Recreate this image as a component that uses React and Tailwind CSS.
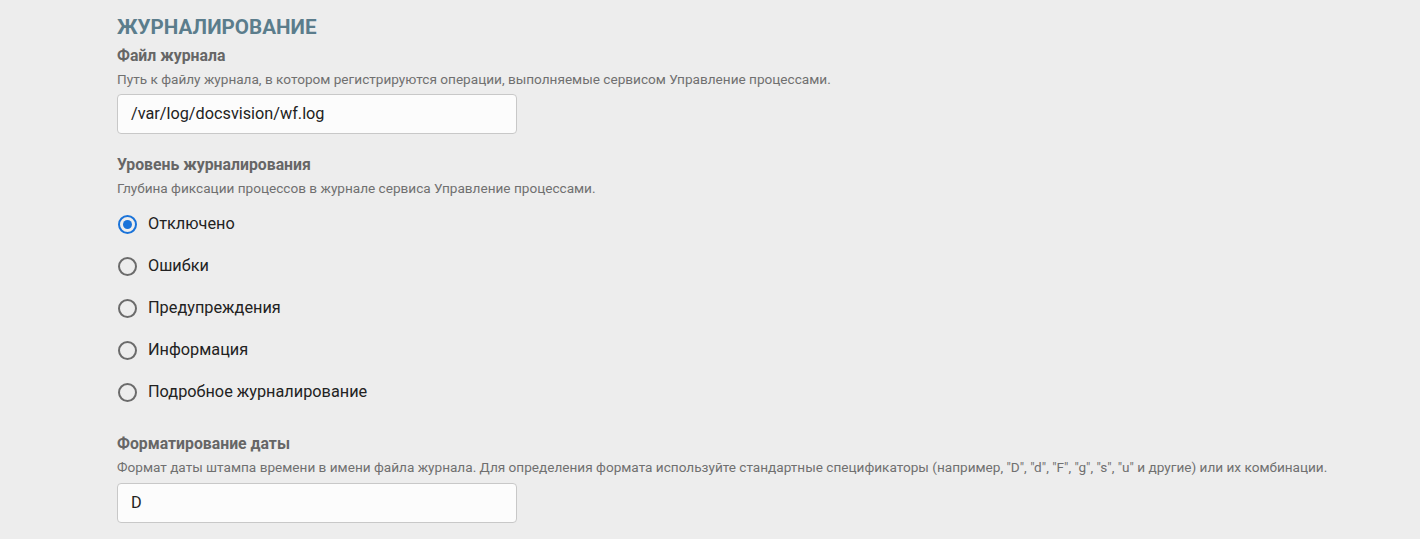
import React from "react";

const options = [
  "Отключено",
  "Ошибки",
  "Предупреждения",
  "Информация",
  "Подробное журналирование",
];

function Radio({ checked, label }) {
  return (
    <label className="flex h-[42px] items-center gap-[11px] pl-[1px]">
      <span
        className={
          "flex h-[19px] w-[19px] items-center justify-center rounded-full border-2 " +
          (checked ? "border-[#1a73d9]" : "border-[#6b6b6b]")
        }
      >
        {checked && <span className="h-[9px] w-[9px] rounded-full bg-[#1a73d9]" />}
      </span>
      <span className="text-[16.3px] text-[#222]">{label}</span>
    </label>
  );
}

export default function App() {
  return (
    <div
      className="min-h-[539px] w-full bg-[#ededed] pl-[117px] pt-[13px]"
      style={{ fontFamily: "Roboto, 'Noto Sans', sans-serif" }}
    >
      <h1 className="text-[20.6px] font-bold uppercase leading-[28px] text-[#5b7d8c]">
        Журналирование
      </h1>

      <div className="mt-[5px]">
        <div className="text-[15.8px] font-bold leading-[20px] text-[#666]">Файл журнала</div>
        <div className="mt-[4px] text-[13.6px] leading-[18px] text-[#707070]">
          Путь к файлу журнала, в котором регистрируются операции, выполняемые сервисом Управление процессами.
        </div>
        <div className="mt-[6px] flex h-[40px] w-[400px] items-center rounded-[4px] border border-[#c8c8c8] bg-[#fcfcfc] px-[13px] text-[16.25px] text-[#222]">
          /var/log/docsvision/wf.log
        </div>
      </div>

      <div className="mt-[21px]">
        <div className="text-[15.8px] font-bold leading-[20px] text-[#666]">Уровень журналирования</div>
        <div className="mt-[4px] text-[13.6px] leading-[18px] text-[#707070]">
          Глубина фиксации процессов в журнале сервиса Управление процессами.
        </div>
        <div className="mt-[6px] flex flex-col">
          {options.map((o, i) => (
            <Radio key={o} label={o} checked={i === 0} />
          ))}
        </div>
      </div>

      <div className="mt-[21px]">
        <div className="text-[15.8px] font-bold leading-[20px] text-[#666]">Форматирование даты</div>
        <div className="mt-[4px] text-[13.6px] leading-[18px] text-[#707070]">
          Формат даты штампа времени в имени файла журнала. Для определения формата используйте стандартные спецификаторы (например, "D", "d", "F", "g", "s", "u" и другие) или их комбинации.
        </div>
        <div className="mt-[7px] flex h-[40px] w-[400px] items-center rounded-[4px] border border-[#c8c8c8] bg-[#fcfcfc] px-[13px] text-[16.25px] text-[#222]">
          D
        </div>
      </div>
    </div>
  );
}
